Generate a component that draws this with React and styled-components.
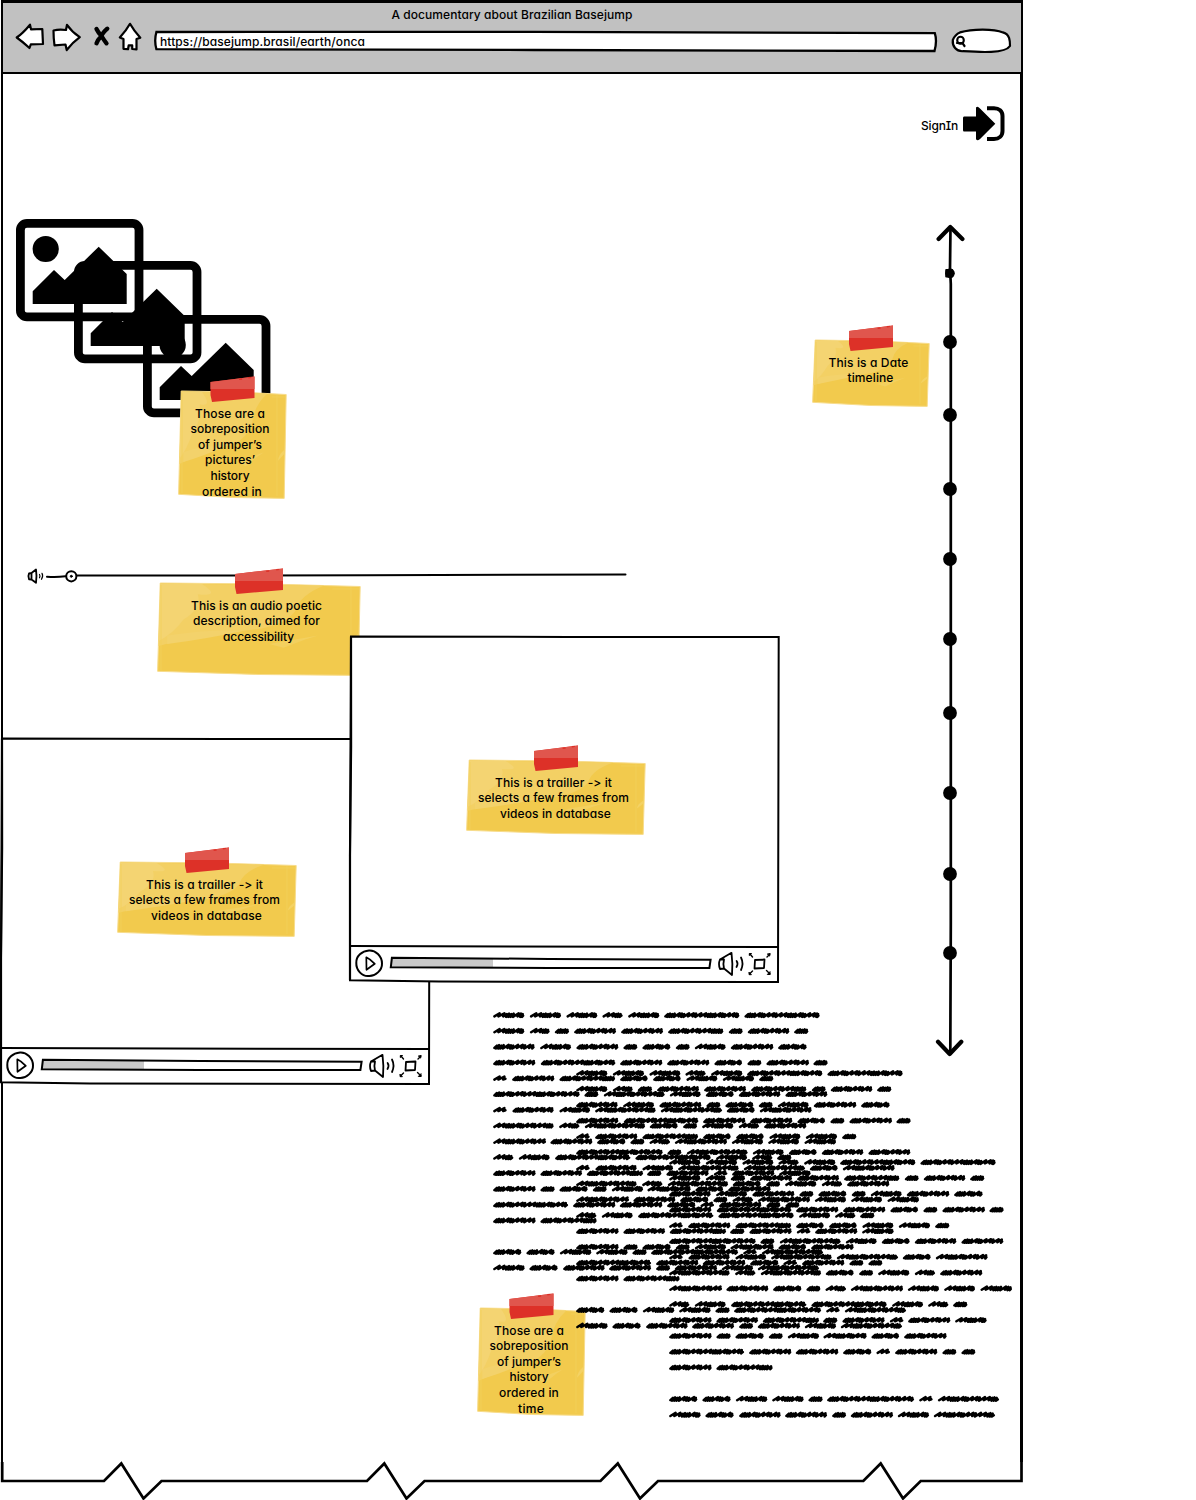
import React, { useLayoutEffect, useRef } from 'react';
import styled, { createGlobalStyle } from 'styled-components';

const GlobalStyle = createGlobalStyle`
  * { box-sizing: border-box; }
  body { margin: 0; background: #fff; color: #000; font-family: Inter, "Open Sans", sans-serif; }
  svg { display: block; overflow: visible; }
`;

const Page = styled.main`
  width: 1196px;
  height: 1500px;
  overflow: hidden;
  background: #fff;
`;

const Browser = styled.section`
  width: 1023px;
  height: 1500px;
  display: flex;
  flex-direction: column;
  padding-left: 1px;
`;

const Chrome = styled.header`
  height: 74px;
  flex: none;
  display: flex;
  flex-direction: column;
  background: #c1c1c1;
  border: 2px solid #000;
  border-top-width: 3px;
`;

const TitleRow = styled.div`
  height: 21px;
  display: flex;
  justify-content: center;
  align-items: center;
  padding-top: 2px;
`;

const Toolbar = styled.nav`
  height: 34px;
  display: flex;
  align-items: center;
  padding: 0 8px 0 13px;
`;

const IconSlot = styled.span`
  width: ${p => p.$w}px;
  height: 28px;
  margin-right: ${p => p.$gap}px;
  padding-bottom: ${p => p.$lift || 0}px;
  display: flex;
  align-items: flex-end;
`;

const Address = styled.div`
  position: relative;
  width: 783px;
  height: 22px;
  display: flex;
  align-items: center;
  padding: 0 0 0 6px;
`;

const AddressText = styled.div`
  position: relative;
  padding-top: 1px;
`;

const SearchField = styled.div`
  position: relative;
  width: 60px;
  height: 26px;
  margin-left: 15px;
`;

const Outline = styled.svg`
  position: absolute;
  left: 0;
  top: 0;
`;

const Canvas = styled.div`
  position: relative;
  flex: 1;
  display: flex;
  flex-direction: column;
  border: solid #000;
  border-width: 0 3px 0 2px;
`;

const TornEdge = styled.svg`
  flex: none;
  width: 1022px;
  height: 38px;
`;

const AccountBar = styled.div`
  height: 145px;
  display: flex;
  justify-content: flex-end;
  padding: 32px 15px 0 0;
`;

const Body = styled.div`
  display: flex;
  justify-content: space-between;
`;

const Story = styled.div`
  width: 640px;
  display: flex;
  flex-direction: column;
  gap: 151px;
  padding-left: 13px;
`;

const Gallery = styled.div`
  height: 197px;
  display: grid;
  grid-template-columns: 58px 68.7px 128px;
  grid-template-rows: 42px 54px 101px;
`;

const Picture = styled.div`
  grid-area: ${p => p.$step} / ${p => p.$step};
`;

const Slider = styled.div`
  display: flex;
  align-items: center;
  height: 18px;
  padding-left: 11px;
`;

const TimelineRail = styled.aside`
  display: flex;
  align-items: flex-start;
  gap: 6px;
  padding: 5px 56px 0 0;
  & > :first-child { margin-top: 101px; }
`;

/* Pinned objects of the free canvas, in page coordinates. */
const Pin = styled.div`
  position: absolute;
  left: ${p => p.$x - 3}px;
  top: ${p => p.$y - 74}px;
`;

const SignIn = styled.div`
  display: flex;
  align-items: center;
  gap: 5px;
  height: 36px;
`;

const SignInText = styled.div`
  padding-top: 4px;
`;

const Note = styled.div`
  position: relative;
  flex: none;
  width: ${p => p.$w}px;
  height: ${p => p.$h}px;
  overflow: hidden;
`;

const Label = styled.span`
  display: block;
  width: max-content;
  font-size: 12px;
  font-weight: 500;
  line-height: 15.6px;
  white-space: pre;
  font-feature-settings: "cv11", "cv08", "calt" 0;
`;

const NoteText = styled.div`
  position: relative;
  display: flex;
  flex-direction: column;
  align-items: center;
  padding: 29.6px 1px 0 0;
  & > ${Label}:not(:last-child) { margin-right: 4px; }
`;

const Player = styled.section`
  position: relative;
  width: 430px;
  height: 347px;
  display: flex;
  flex-direction: column;
  justify-content: flex-end;
`;

const Controls = styled.div`
  position: relative;
  height: 36px;
  display: flex;
  align-items: center;
  gap: 7px;
  padding: 0 7px 4px 6px;
`;

const Track = styled.div`
  flex: 1;
  height: 14px;
`;

const PlayerActions = styled.div`
  display: flex;
  align-items: center;
  gap: 4px;
  padding-top: 1px;
`;

function Line({ width, children }) {
  const ref = useRef(null);
  useLayoutEffect(() => {
    const el = ref.current;
    el.style.letterSpacing = '0px';
    const natural = el.getBoundingClientRect().width;
    el.style.letterSpacing = `${(width - natural) / children.length}px`;
  }, [width, children]);
  return <Label ref={ref}>{children}</Label>;
}

const ink = { fill: 'none', stroke: '#000', strokeWidth: 2, strokeLinecap: 'round', strokeLinejoin: 'round' };

function StickyNote({ w, h, tape = 44, lines }) {
  const t = (w - tape) / 2;
  const ph = h - 14;
  return (
    <Note $w={w} $h={h}>
      <Outline width={w} height={h} fill="none">
        <path d={`M3.2 15L${w * 0.55} 16L${w - 0.8} 18.5L${w - 2.8} ${h - 0.6}L${w * 0.5} ${h - 1.5}L0.6 ${h - 4.7}Z`} fill="#f2ca4d" stroke="#f7dc8c" strokeWidth="1" />
        <path d={`M3.5 15.5L${w * 0.82} 17.5Q${w * 0.7} ${14 + ph * 0.14} ${w * 0.68} ${14 + ph * 0.3}Q${w * 0.64} ${14 + ph * 0.44} ${w * 0.5} ${14 + ph * 0.5}Q${w * 0.2} ${14 + ph * 0.58} 1.5 ${14 + ph * 0.68}Z`} fill="#f3d064" />
        <path d={`M3.5 15.5L${w * 0.22} 16Q${w * 0.32} ${14 + ph * 0.16} ${w * 0.2} ${14 + ph * 0.13}Q${w * 0.22} ${14 + ph * 0.28} ${w * 0.13} ${14 + ph * 0.4}Q${w * 0.08} ${14 + ph * 0.55} 1.5 ${14 + ph * 0.63}Z`} fill="#f4d472" />
        <path d={`M${w * 0.05} ${14 + ph * 0.57}Q${w * 0.25} ${14 + ph * 0.5} ${w * 0.42} ${14 + ph * 0.52}Q${w * 0.25} ${14 + ph * 0.6} ${w * 0.05} ${14 + ph * 0.66}Z`} fill="#f3d26b" />
        <path d={`M${w * 0.55} ${14 + ph * 0.66}L${w * 0.79} ${14 + ph * 0.57}L${w * 0.73} ${14 + ph * 0.61}L${w * 0.62} ${14 + ph * 0.7}Z`} fill="#f3d05f" />
        <path d={`M${w - 3} ${14 + ph * 0.55}Q${w - 9} ${14 + ph * 0.6} ${w - 9} ${14 + ph * 0.65}L${w - 3} ${14 + ph * 0.59}Z`} fill="#f4d264" />
        <path d={`M${w - 10} 19V${h - 3}M${w * 0.86} 21H${w - 2}M4 17V${h - 6}`} stroke="#f3d05c" strokeWidth="0.8" />
        <path d={`M${t} 6L${t + tape} 0.5V22L${t + 1.5} 26L${t} 19Z`} fill="#dd3128" />
        <path d={`M${t} 6L${t + tape} 0.5V13H${t}Z`} fill="#e0564d" />
        <path d={`M${t + tape * 0.65} 3.4l3 -.4M${t + tape * 0.86} 1.7l3 -.3`} stroke="#dd3128" strokeWidth="1.4" />
      </Outline>
      <NoteText>
        {lines.map(([text, width]) => <Line key={text} width={width}>{text}</Line>)}
      </NoteText>
    </Note>
  );
}

function PictureIcon() {
  return (
    <svg width="128" height="103">
      <rect x="4.4" y="4.4" width="118.6" height="93.5" rx="6.5" fill="none" stroke="#000" strokeWidth="8.8" />
      <circle cx="29.7" cy="30" r="13.1" />
      <path d="M16.7 85V72.3L38 51L48.7 61L82.7 27.7L110.7 55V85Z" />
    </svg>
  );
}

function VideoPlayer() {
  return (
    <Player>
      <Outline width="430" height="347">
        <path d="M2 .4L220 .9L429.7 1L429 346L90 345.6L1 344.2L1 220Z" fill="#fff" stroke="#000" strokeWidth="2" />
        <path d="M2 .4L2.1 110L1 220V344" fill="none" stroke="#000" strokeWidth="2.2" />
        <path d="M1 310.1L429 311.1" stroke="#000" strokeWidth="2" />
      </Outline>
      <Controls>
        <svg width="27" height="27" viewBox="0 0 27 27" {...ink}>
          <path d="M14 .5C20.5 0 27 6 27 13.5C27.3 20 20.5 26.5 13.5 26C7 26.5 1 20 1.3 13C1 6 7 1 14 .5Z" />
          <path d="M11.3 7.3C15 9 17.5 11.5 19.8 13.8L11.5 19.8Z" strokeWidth="1.7" />
        </svg>
        <Track>
          <svg width="322" height="14">
            <path d="M2.6 2L104 2.4V11.6L2 11.3Z" fill="#c9c9c9" />
            <path d="M2.9 1.8L160 2.9L321.6 3.7L320.4 12L160 11.9L1.8 11.3Z" fill="none" stroke="#000" strokeWidth="2" />
          </svg>
        </Track>
        <PlayerActions>
          <svg width="27" height="24" viewBox="0 0 27 24" {...ink}>
            <path d="M2 7.5Q0 12 2 17L6 16.5M2 7.5L6 7.5Q4.8 12 6 16.5L14 23Q15 12 13.5 .8Z" strokeWidth="1.8" />
            <path d="M18.6 9Q20.5 11.5 18.5 15M23 5.5Q26 11.5 23 18" strokeWidth="1.8" />
          </svg>
          <svg width="24" height="24" viewBox="0 0 24 24" {...ink}>
            <path d="M6 8L15.5 7.5L15 16L5.5 16.5Z" strokeWidth="1.8" />
            <path d="M3.5 5L1 2M18 5L20.5 2.5M3.5 19L.5 22M17.5 18.5L21 22" strokeWidth="1.4" />
            <path d="M.3 3.2V1.5H2.2ZM18.7 2L21.2 1.5L20.7 3.7ZM0 20.5L.2 22.7H2ZM21 20V22.5H18.7Z" strokeWidth="1" fill="#000" />
          </svg>
        </PlayerActions>
      </Controls>
    </Player>
  );
}

/* Word extents of each scribbled line, in thirds of a pixel. */
const scribbleRows = [
  [0,93,110,203,220,312,328,388,405,498,513,738,754,979],
  [0,93,110,169,185,227,243,368,384,509,525,690,707,748,764,888,903,945],
  [0,124,141,233,250,375,391,432,448,531,548,589,605,697,713,840,855,940],
  [0,126,143,366,381,507,522,648,664,746,763,804,820,947,961,1003],
  [0,40,57,183,199,365,381,463,480,562,580,672,689,782,798,840],
  [0,259,274,315,332,514,530,622,638,721,737,861,877,1002],
  [0,40,58,181,199,290,306,487,503,686,701,784,800,955],
  [0,181,198,258,275,455,470,553,570,611,627,720,737,797,813,939],
  [0,158,172,297,312,396,412,453,469,530,545,701,716,809,825,917,934,1028],
  [0,60,77,169,186,411,427,652,669,761,777,837,852,894],
  [0,127,142,266,281,449,462,504,520,646,662,702,717,843,858,952],
  [0,127,142,184,199,283,299,340,356,449,463,592,607,689,705,832],
  [0,224,240,366,380,507,522,606,622,662,678,804,820,861,877,918],
  [0,127,142,310],
  [],
  [0,84,100,184,200,294,309,403,418,460,474,734,750,790,806,989],
  [0,94,109,193,210,334,348,473,489,530,545,671,686,779,794,977],
];

const strides = [5.2, 4.8, 2.5, 2.2, 2.2, 2.4, 5, 2.3, 2.2, 4.9, 4.6, 2.4];

function scribblePath() {
  let d = '';
  scribbleRows.forEach((row, r) => {
    const y = 4.2 + r * 15.79;
    for (let i = 0; i < row.length; i += 2) {
      const end = row[i + 1] / 3 - 1.2;
      const span = row[i + 1] - row[i];
      let x = row[i] / 3 + 1.4;
      let k = span % 41 < 5 || span > 200 ? 2 : 0;
      d += `M${x.toFixed(1)} ${(y + 1.2).toFixed(1)}`;
      while (x < end - 1) {
        const s = Math.min(strides[k % strides.length], end - x);
        const wide = s > 4;
        const top = y - (wide ? 1.9 : 1.1 + (k % 2) * 0.5);
        const low = y + (wide ? 1.2 : 1.7);
        d += `L${(x + s).toFixed(1)} ${top.toFixed(1)}L${(x + s - (wide ? 1.2 : 0.8)).toFixed(1)} ${low.toFixed(1)}`;
        x += s;
        k += 1;
      }
      d += `L${(end + 0.3).toFixed(1)} ${(y + 0.4).toFixed(1)}`;
    }
  });
  return d;
}

const scribble = scribblePath();

function ScribbleText() {
  return (
    <svg width="343" height="262">
      <path d={scribble} {...ink} strokeWidth="2.5" />
    </svg>
  );
}

function Timeline() {
  return (
    <svg width="28" height="832" {...ink} strokeWidth="3">
      <path d="M14.5 3L14 44L14.8 60V700L14.3 828" strokeWidth="2.7" />
      <path d="M2.6 15L14.3 3L26.4 15M2 817.7L13.7 830L25.3 817.7" strokeWidth="4.2" />
      <rect x="9.2" y="45" width="8" height="8.6" rx="1" fill="#000" stroke="none" />
      <circle cx="14" cy="49.3" r="4.8" fill="#000" stroke="none" />
      {[342, 415, 489, 559, 639, 713, 793, 874, 953].map(y => (
        <circle key={y} cx="14" cy={y - 224} r="6.9" fill="#000" stroke="none" />
      ))}
    </svg>
  );
}

const jumperNote = ['Those are a', 70];
const trailerLines = [['This is a trailler -> it', 117], ['selects a few frames from', 151], ['videos in database', 111]];

export default function App() {
  return (
    <Page>
      <GlobalStyle />
      <Browser>
        <Chrome>
          <TitleRow><Line width={241}>A documentary about Brazilian Basejump</Line></TitleRow>
          <Toolbar>
            <IconSlot $w={27} $gap={9} $lift={4}>
              <svg width="27" height="28" {...ink} fill="#fff" strokeWidth="2.2"><path d="M.7 14.5C6 11 10 6.5 14 1.7L15 6.3L26.3 6L27 21L14.8 21.3L13.5 25Q7 19 .7 14.5Z" /></svg>
            </IconSlot>
            <IconSlot $w={28} $gap={13} $lift={4}>
              <svg width="28" height="28" {...ink} fill="#fff" strokeWidth="2.2"><path d="M1.5 7.5Q7 6 14 7L15 1.8Q20 9 27.8 14.2Q20 20 14.7 27L13.5 21.5L2.5 22.3Q1.5 15 1.5 7.5Z" /></svg>
            </IconSlot>
            <IconSlot $w={16} $gap={10} $lift={4}>
              <svg width="16" height="28" {...ink} strokeWidth="4.3"><path d="M3.5 6Q5.5 10 8.5 13Q11.5 18 13.5 20.3M14.3 5.7Q9.5 10 8.5 13Q4.5 17 3.5 20.3" /></svg>
            </IconSlot>
            <IconSlot $w={22} $gap={13} $lift={4}>
              <svg width="22" height="28" {...ink} fill="#fff" strokeWidth="2.2"><path d="M11 .8Q15 8 21.3 14.7L17.5 16V26.4L13.2 26V22.3H9.7L9 26.2L4.5 25.8V16L.8 14.5Q7 8 11 .8Z" /></svg>
            </IconSlot>
            <Address>
              <Outline width="783" height="22">
                <path d="M2.4 2L380 1.8L780.8 3.2Q783.3 11 780.5 21L380 20L2.4 19.2Q0 10.5 2.4 2Z" fill="#fff" stroke="#000" strokeWidth="2.3" />
              </Outline>
              <AddressText><Line width={205}>https://basejump.brasil/earth/onca</Line></AddressText>
            </Address>
            <SearchField>
              <Outline width="60" height="26" {...ink}>
                <path d="M8 4.4C20 .6 42 .6 51 4.4C58 6.4 58 13 58 18C53 25.7 28 24.2 11 23.2C4 23.7 .2 18 .8 12Q3 6.4 8 4.4Z" fill="#fff" strokeWidth="2.2" />
                <ellipse cx="8.5" cy="12.3" rx="3.3" ry="3.5" strokeWidth="2.1" />
                <path d="M5 15L10.5 15.2L12.5 18" strokeWidth="2.2" />
              </Outline>
            </SearchField>
          </Toolbar>
        </Chrome>
        <Canvas>
          <AccountBar>
            <SignIn>
              <SignInText><Line width={37}>SignIn</Line></SignInText>
              <svg width="42" height="36">
                <path d="M1 10.5H13V1.5Q14.5 -.5 17 2.5L32.3 17.7L17 33Q14 35.5 13 33V25.5H1Q0 25.5 0 24V12Q0 10.5 1 10.5Z" />
                <path d="M24 2.2H31C36 2.2 39.5 5 39.5 10V25C39.5 30 36 33 31 33H24" fill="none" stroke="#000" strokeWidth="4" />
              </svg>
            </SignIn>
          </AccountBar>
          <Body>
            <Story>
              <Gallery>
                <Picture $step={1}><PictureIcon /></Picture>
                <Picture $step={2}><PictureIcon /></Picture>
                <Picture $step={3}><PictureIcon /></Picture>
              </Gallery>
              <Slider>
                <svg width="600" height="18" {...ink}>
                  <path d="M2 6.5L4.5 6L9 2.5Q10 9 9 15.8L4.5 12.5L2 12.3Q.8 9 2 6.5ZM4.5 6V12.5" strokeWidth="1.8" />
                  <path d="M12.5 7.5Q13.5 9 12.5 10.8M15 6.3Q16.5 9 14.5 12.3" strokeWidth="1.2" />
                  <path d="M20 9.7Q29 10.5 38.5 9.3M50 8.5L340 8.3L598.5 7.5" />
                  <circle cx="44.3" cy="9.3" r="5.1" fill="#fff" />
                  <circle cx="44.3" cy="9.3" r="1" fill="#000" strokeWidth="1" />
                </svg>
              </Slider>
            </Story>
            <TimelineRail>
              <StickyNote w={118} h={82} lines={[['This is a Date', 80], ['timeline', 46]]} />
              <Timeline />
            </TimelineRail>
          </Body>
          <Pin $x={178} $y={376}>
            <StickyNote w={109} h={123} lines={[jumperNote, ['sobreposition', 79], ['of jumper’s', 64], ['pictures’', 50], ['history', 39], ['ordered in', 60]]} />
          </Pin>
          <Pin $x={157} $y={568}>
            <StickyNote w={204} h={108} tape={48} lines={[['This is an audio poetic', 131], ['description, aimed for', 127], ['accessibility', 71]]} />
          </Pin>
          <Pin $x={0} $y={738}><VideoPlayer /></Pin>
          <Pin $x={349} $y={636}><VideoPlayer /></Pin>
          <Pin $x={117} $y={847}><StickyNote w={180} h={90} lines={trailerLines} /></Pin>
          <Pin $x={466} $y={745}><StickyNote w={180} h={90} lines={trailerLines} /></Pin>
          <Pin $x={477} $y={1293}>
            <StickyNote w={109} h={123} lines={[jumperNote, ['sobreposition', 79], ['of jumper’s', 64], ['history', 39], ['ordered in', 60], ['time', 26]]} />
          </Pin>
          <Pin $x={493.3} $y={1011.3}><ScribbleText /></Pin>
          <Pin $x={576.4} $y={1069.3}><ScribbleText /></Pin>
          <Pin $x={669.3} $y={1158.3}><ScribbleText /></Pin>
        </Canvas>
        <TornEdge viewBox="1 1462 1022 38" {...ink} strokeWidth="2.7">
          <path d="M2.2 1462V1481H104L121.3 1463.5L143.5 1498.5L161.5 1481H367L384.3 1463.5L406.5 1498.5L424.5 1481H600.5L617.8 1463.5L640 1498.5L658 1481H863.3L880.7 1463.5L903 1498.5L920.7 1481H1021.5V1462" strokeLinejoin="miter" strokeLinecap="butt" />
        </TornEdge>
      </Browser>
    </Page>
  );
}
